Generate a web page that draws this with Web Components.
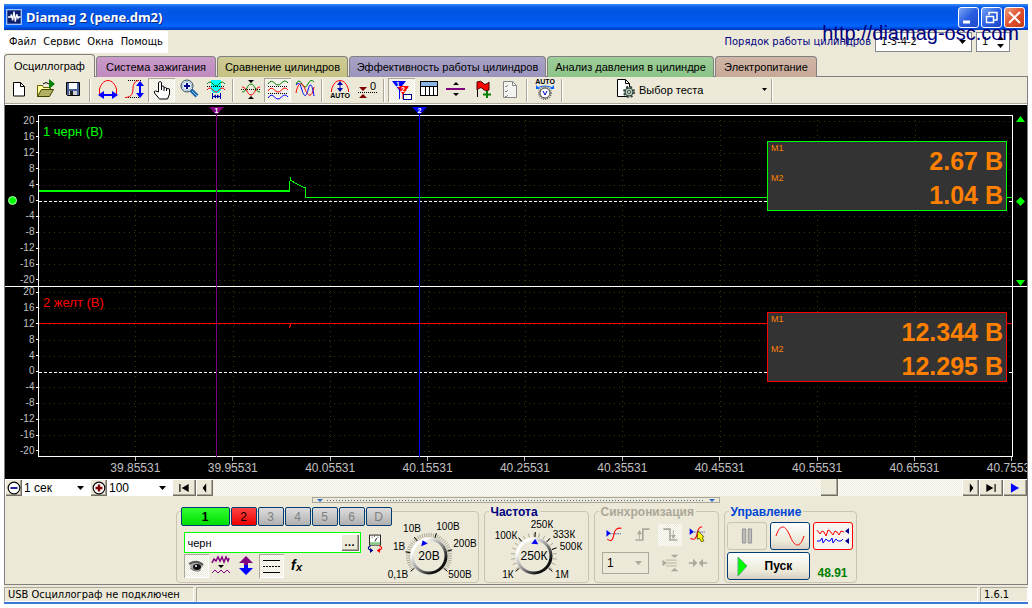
<!DOCTYPE html>
<html lang="ru">
<head>
<meta charset="utf-8">
<title>Diamag 2 (реле.dm2)</title>
<style>
  body { margin: 0; background: #fff; }
</style>
</head>
<body>
<dm-app></dm-app>

<script>
const BASE = `
  :host, *, *::before, *::after { box-sizing: border-box; }
  button, input, select { font: inherit; color: inherit; margin: 0; padding: 0; border: 0; border-radius: 0; background: none; }
  select { appearance: none; }
`;
const DITHER = 'repeating-conic-gradient(#fff 0 25%, #ece9d8 0 50%) 0 0 / 2px 2px';

class Base extends HTMLElement {
  constructor() {
    super();
    this.attachShadow({ mode: 'open' });
  }
  connectedCallback() {
    const t = document.createElement('template');
    t.innerHTML = `<style>${BASE}${this.css()}</style>${this.html()}`;
    this.shadowRoot.replaceChildren(t.content.cloneNode(true));
  }
  css() { return ':host{display:block}'; }
  html() { return '<slot></slot>'; }
  a(name, fallback = '') { return this.getAttribute(name) ?? fallback; }
}

/* ---------- icons, drawn on a 24 x 24 field ---------- */
const ICONS = {
  app: `<rect x="0" y="0" width="24" height="24" fill="#0b1f6b"/><rect x="1" y="1" width="22" height="22" fill="none" stroke="#9fc0ff" stroke-width="2"/><path d="M3 12h4l1-4 2 9 2-13 2 15 2-11 2 6 1-2h3" fill="none" stroke="#fff" stroke-width="2"/>`,
  new: `<path d="M6.500 4.500h7l4 4v9.500h-11z" fill="#fff" stroke="#000"/><path d="M13.500 4.500v4h4" fill="none" stroke="#000"/>`,
  open: `<path d="M3.500 18.500v-11h5l1 2h7v3" fill="#ffff9c" stroke="#606000"/><path d="M3.500 18.500l4-7h12l-4 7z" fill="#b0b060" stroke="#404000"/><path d="M9 6q3-3 6 0" fill="none" stroke="#000"/><path d="M15 1l6 5-6 5z" fill="#008000"/>`,
  save: `<path d="M5.500 4.500h13v13h-12l-1-1z" fill="#4a6396" stroke="#000"/><rect x="8" y="5" width="8" height="6" fill="#fff"/><rect x="8" y="13" width="8" height="4" fill="#d0d0d8"/><rect x="9" y="13" width="3" height="4" fill="#222"/>`,
  hfit: `<path d="M3.500 16v-5C5 6 8 2.500 12 2.500S19 6 20.500 11v5" fill="none" stroke="#f00"/><path d="M5 17h14" stroke="#00f" stroke-width="2"/><path d="M2 17l6-4v8zM22 17l-6-4v8z" fill="#00f"/>`,
  vfit: `<path d="M5 2.500h14M5 19.500h12" stroke="#000" stroke-dasharray="1 1"/><path d="M2 19.500c7 0 8-5 8-9s2-8 6-8" fill="none" stroke="#f00"/><path d="M17 7v9" stroke="#00f" stroke-width="2"/><path d="M17 3l-4 5h8zM17 20l-4-5h8z" fill="#00f"/>`,
  hand: `<path d="M8.500 14V4.500q1.500-2 3 0V10v-1.500q1.500-1 2.500 0V10q1.500-1 2.500 0v1q1.500-1 3 0v5l-2 5h-8l-5-6q-1-2 1-2z" fill="#fff" stroke="#000"/><path d="M11.500 9v3M14 10v3M16.500 11v2" stroke="#000"/>`,
  zoom: `<circle cx="10" cy="8" r="6" fill="#e8f4ff" stroke="#345"/><circle cx="10" cy="8" r="4.500" fill="none" stroke="#9bc"/><path d="M10 5v6M7 8h6" stroke="#008" stroke-width="2"/><path d="M14 12l6 6" stroke="#26a" stroke-width="4"/><path d="M15 13l5 5" stroke="#7cf" stroke-width="1"/>`,
  band: `<rect x="7" y="2" width="10" height="10" fill="#0ff"/><path d="M7 12h10l-2 3H9z" fill="#0ff"/><path d="M3 6q3-4 6 0t6 0 6 0" fill="none" stroke="#008000"/><path d="M3 12q3-4 6 0t6 0 6 0" fill="none" stroke="#f00"/><path d="M3 8.500h18" stroke="#000" stroke-dasharray="1 1"/><path d="M8.500 15v6M16.500 15v6M9 18.500h7" stroke="#00a"/><path d="M9 18.500l3-2v4zM16 18.500l-3-2v4z" fill="#00a"/>`,
  center: `<path d="M3 14c5 0 5-8 9-8s4 8 9 8" fill="none" stroke="#008000"/><path d="M3 9c5 0 5 8 9 8s4-8 9-8" fill="none" stroke="#f00"/><path d="M2 11.500h20" stroke="#000" stroke-dasharray="1 1"/><path d="M9 2h6l-3 3zM9 21h6l-3-3z" fill="#000"/>`,
  split: `<g fill="none"><path d="M2 6q3-5 6.500-1t7 0T22 5" stroke="#008000"/><path d="M2 13q3-5 6.500-1t7 0T22 12" stroke="#f00"/><path d="M2 20q3-5 6.500-1t7 0T22 19" stroke="#00f"/><path d="M2 8.500h20M2 15.500h20" stroke="#000" stroke-dasharray="1 1"/></g>`,
  overlay: `<g fill="none"><path d="M3 6q3-6 6 0t6 0 6-2" stroke="#008000"/><path d="M3 15C5 4 9 3 12 11s7 9 9-2" stroke="#f00"/><path d="M3 7c3-3 4-2 6 5s4 8 6 0 4-7 6 6" stroke="#00f"/></g>`,
  auto0: `<path d="M3.500 14v-2C5 6 8 2.500 12 2.500S19 6 20.500 12v2" fill="none" stroke="#f00"/><path d="M12 5v7" stroke="#00a"/><path d="M12 3l-3 4h6zM12 14l-3-4h6z" fill="#00a"/><text x="12" y="20" font-size="7" font-weight="700" text-anchor="middle">AUTO</text>`,
  zero: `<path d="M4 9h8l-4 4zM4 20h8l-4-4z" fill="#800000"/><path d="M3 14.500h19" stroke="#000" stroke-dasharray="1 1"/><text x="18" y="12" font-size="11" text-anchor="middle">0</text>`,
  markers: `<path d="M2 3h14l-7 9z" fill="#00f"/><path d="M7 8h12l-6 9z" fill="#f00"/><path d="M9.500 11v10" stroke="#00f"/><path d="M13 15v6" stroke="#f00"/><text x="6" y="9" font-size="7" font-weight="700" fill="#fff">1</text><text x="11" y="14" font-size="7" font-weight="700" fill="#fff">2</text><rect x="13.500" y="16.500" width="8" height="5" fill="#fff" stroke="#008"/>`,
  table: `<rect x="3.500" y="3.500" width="17" height="14" fill="#fff" stroke="#000"/><rect x="4" y="4" width="16" height="4" fill="#8ab4e8"/><path d="M4 8.500h16M8.500 8v9M12.500 8v9M16.500 8v9" stroke="#000"/>`,
  minus: `<path d="M2 11h19" stroke="#800080" stroke-width="2"/><path d="M9 7h6l-3-3zM9 15h6l-3 3z"/>`,
  flag: `<path d="M6.500 4v15" stroke="#000"/><path d="M6 4q4-2 6 1t6-1v8q-4 2-6-1t-6 1z" fill="#f00" stroke="#400"/><path d="M16 13v7M12 16.500h8" stroke="#008000" stroke-width="2"/>`,
  list: `<path d="M5.500 3.500h9l4 4v12h-13z" fill="#f4f4f0" stroke="#888"/><path d="M14.500 3.500v4h4M7 8l1 1 2-2M7 13l1 1 2-2M7 18l1 1 2-2" fill="none" stroke="#888"/>`,
  autov: `<text x="12" y="6" font-size="7" font-weight="700" text-anchor="middle">AUTO</text><path d="M4 10q8-4 16 0" fill="none" stroke="#06f"/><path d="M3 7v4h4zM21 7v4h-4z" fill="#06f"/><circle cx="12" cy="15" r="6" fill="none" stroke="#777" stroke-width="2" stroke-dasharray="1 1"/><circle cx="12" cy="15" r="5" fill="#fff" stroke="#444"/><path d="M10 13l2 4 2-4" fill="none" stroke="#00c"/>`,
  test: `<path d="M5.500 1.500h8l4 4v13h-12z" fill="#fff" stroke="#000"/><path d="M13.500 1.500v4h4" fill="none" stroke="#000"/><circle cx="17" cy="14" r="5" fill="#b8ccb0" stroke="#344" stroke-width="2" stroke-dasharray="2 2"/><circle cx="17" cy="14" r="4" fill="#b8ccb0" stroke="#344"/><circle cx="17" cy="14" r="1.500" fill="#fff" stroke="#344"/>`,
  zoomout: `<circle cx="12" cy="12" r="10" fill="#fff" stroke="#000" stroke-width="2"/><path d="M6 12h12" stroke="#008" stroke-width="3"/>`,
  zoomin: `<circle cx="12" cy="12" r="10" fill="#fff" stroke="#000" stroke-width="2"/><path d="M6 12h12M12 6v12" stroke="#800000" stroke-width="4"/>`,
  first: `<path d="M4 5h2v14H4zM8 12l12-7v14z"/>`,
  prev: `<path d="M8 12l6-8v16z"/>`,
  next: `<path d="M16 12l-6-8v16z"/>`,
  last: `<path d="M18 5h2v14h-2zM16 12L4 5v14z"/>`,
  play: `<path d="M5 4l14 8-14 8z" fill="#00f"/>`,
  probe: `<rect x="5.500" y="2.500" width="13" height="12" fill="#fff" stroke="#000"/><rect x="6" y="11" width="12" height="3" fill="#8c8"/><path d="M8 5h1M11 4h1M15 5h1M12 10l2-4" stroke="#000"/><path d="M7 15q-6 3 0 6" fill="none" stroke="#008" stroke-width="1.500"/><path d="M17 15q6 3 0 6" fill="none" stroke="#f00" stroke-width="1.500"/><path d="M6 18v6l4-3z" fill="#008"/><path d="M18 18v6l-4-3z" fill="#f00"/>`,
  eye: `<path d="M6 10q7-5 13 2-3 5-8 5t-5-7z" fill="#a8a8a8"/><path d="M5 10q8-5 14 1" fill="none" stroke="#555" stroke-width="2"/><ellipse cx="13" cy="13" rx="4" ry="3" fill="#111"/><circle cx="12" cy="12" r="1" fill="#fff"/><path d="M6 14q6 5 11 2" fill="none" stroke="#777"/>`,
  noise: `<path d="M3 9l2-4 2 2 2-4 2 4 2-4 2 5 2-5 2 4 1-3" fill="none" stroke="#800080" stroke-width="1.500"/><path d="M9 11h6l-3 3z"/><path d="M3 19l3-3 3 3 3-3 3 3 3-3 3 3" fill="none" stroke="#800080"/>`,
  updown: `<path d="M12 2l7 7h-5v3h-4V9H5z" fill="#800080"/><path d="M12 21l7-7h-5v-3h-4v3H5z" fill="#00f"/>`,
  lines: `<path d="M4 6.500h17M4 18.500h17" stroke="#000"/><path d="M4 12.500h17" stroke="#000" stroke-dasharray="2 1"/>`,
  fx: `<text x="7" y="16" font-size="14" font-style="italic" font-weight="700" font-family="Liberation Serif, serif">f</text><text x="12" y="17" font-size="11" font-style="italic" font-weight="700" font-family="Liberation Serif, serif">x</text>`,
  level: `<path d="M3 6v8l5-4z" fill="#00f"/><path d="M5 10.500h16" stroke="#008" stroke-dasharray="1 1"/><path d="M4 17c5 4 7 0 8-6s4-8 9-7" fill="none" stroke="#f00" stroke-width="1.300"/>`,
  rise: `<path d="M4 18h9V5h8" fill="none" stroke="#aca899" stroke-width="2"/><path d="M9 17V9" stroke="#aca899"/><path d="M6 11l3-5 3 5z" fill="#aca899"/>`,
  fall: `<path d="M4 5h8v13h9" fill="none" stroke="#aca899" stroke-width="2"/><path d="M16 6v8" stroke="#aca899"/><path d="M13 12l3 5 3-5z" fill="#aca899"/>`,
  pick: `<path d="M2 4v8l5-4z" fill="#00f"/><path d="M3 8.500h17" stroke="#008" stroke-dasharray="1 1"/><path d="M3 16c5 3 7 0 8-6s3-8 6-8" fill="none" stroke="#f00" stroke-width="1.300"/><path d="M12 7l7 7-2 1 2 4-3 1-2-4-3 1z" fill="#ff0" stroke="#440"/>`,
  span: `<path d="M3 8v8l5-4z" fill="#aca899"/><path d="M7 8.500h13M8 12h12M7 15.500h13" stroke="#aca899"/><path d="M13 2h9l-4.500 4zM13 22h9l-4.500-4z" fill="#aca899"/>`,
  squeeze: `<path d="M1 12h9M14 12h9" stroke="#aca899" stroke-width="2"/><path d="M6 7l5 5-5 5zM18 7l-5 5 5 5z" fill="#aca899"/>`,
  pause: `<path d="M6.500 3.500h4v17h-4zM13.500 3.500h4v17h-4z" fill="#bdbdbd" stroke="#8a8a8a"/>`,
  start: `<path d="M7 3l9 9-9 10z" fill="#0f0" stroke="#5a7" />`,
};
class DmIcon extends Base {
  css() { return ':host{display:block;width:var(--s,24px);height:var(--s,24px);flex:none} svg{display:block;width:100%;height:100%} text{font-family:"Liberation Sans",Arial,sans-serif}'; }
  html() { return `<svg viewBox="0 0 24 24" aria-hidden="true">${ICONS[this.a('name')] || ''}</svg>`; }
}

/* ---------- title bar ---------- */
class DmTitle extends Base {
  css() { return `
    :host { display:flex; align-items:center; height:26px; padding:0 3px 0 2px; gap:4px;
      background:linear-gradient(#3c8cf6 0,#0a5ce8 3px,#0054e3 8px,#0058ee 16px,#0066ff 22px,#0048d8 24px,#003cb8 26px); }
    dm-icon { --s:16px; }
    h1 { flex:1; margin:0; font:700 13px/20px "Noto Sans","Open Sans",sans-serif; color:#fff; text-shadow:1px 1px #0a2a8a; }
    button { width:21px; height:21px; display:grid; place-items:center; border:1px solid #fff; border-radius:3px; background:linear-gradient(135deg,#7aa4f4,#2a5ee0 50%,#1c48c8); margin-left:-2px; }
    .close { background:linear-gradient(135deg,#f0a080,#e0502c 50%,#c43c18); }
    svg { display:block; width:17px; height:17px; fill:none; stroke:#fff; stroke-width:2; }`; }
  html() { return `
    <dm-icon name="app"></dm-icon><h1><slot></slot></h1>
    <button aria-label="Свернуть"><svg viewBox="0 0 17 17"><path d="M3 13h7" stroke-width="3"/></svg></button>
    <button aria-label="Восстановить"><svg viewBox="0 0 17 17"><path d="M6 6V3.500h8V11h-3" stroke-width="1.500"/><path d="M3.500 7.500h7v6h-7z" stroke-width="1.500"/></svg></button>
    <button class="close" aria-label="Закрыть"><svg viewBox="0 0 17 17"><path d="M3 3l11 11M14 3L3 14"/></svg></button>`; }
}

/* ---------- menu row ---------- */
class DmMenu extends Base {
  css() { return `
    :host { display:flex; justify-content:space-between; height:24px; padding-right:18px; font:11px/16px "DejaVu Sans Condensed","DejaVu Sans",sans-serif; color:#000; }
    nav { display:flex; align-items:center; gap:7px; background:#fff; height:22px; margin-top:1px; padding:0 5px; }
    .r { display:flex; align-items:center; gap:4px; }
    label { color:#000080; }
    .box { display:flex; align-items:center; background:#fff; border:1px solid #828790; height:20px; padding:0 5px; }
    .box > select { width:78px; } .box > input { width:15px; }
    svg { display:block; flex:none; }`; }
  html() { return `
    <nav><button>Файл</button><button>Сервис</button><button>Окна</button><button>Помощь</button></nav>
    <div class="r"><label for="ord">Порядок работы цилиндров</label>
      <span class="box"><select id="ord"><option>1-3-4-2</option></select><svg width="7" height="4"><path d="M0 0h7l-3.500 4z"/></svg></span>
      <span class="box"><input id="cyl" value="1" aria-label="Цилиндр"><svg width="7" height="12"><path d="M0 4h7L3.500 0zM0 8h7l-3.500 4z"/></svg></span></div>`; }
}

/* ---------- tabs ---------- */
class DmTab extends Base {
  css() { return `
    :host { display:block; flex:0 0 var(--w); }
    button { display:block; width:100%; height:21px; margin-top:2px; background:linear-gradient(color-mix(in srgb,var(--c) 85%,#fff),var(--c)); border:1px solid #808080; border-bottom:0; border-radius:4px 4px 0 0; font:11px/18px "Liberation Sans",Arial,sans-serif; color:#000; white-space:nowrap; }
    :host([active]) button { height:23px; margin:0; line-height:20px; }`; }
  html() { return `<button role="tab" aria-selected="${this.hasAttribute('active')}"><slot></slot></button>`; }
}
class DmTabs extends Base {
  css() { return ':host{display:flex;gap:1px;height:23px;border-bottom:1px solid #808080;}'; }
}

/* ---------- toolbar ---------- */
class DmTool extends Base {
  css() { return `
    :host { display:block; }
    button { display:grid; place-items:center; width:var(--w,27px); height:var(--h,24px); }
    :host([pressed]) button { background:${DITHER}; box-shadow:inset 1px 1px #aca899, inset -1px -1px #fff; }
    :host([raised]) button { background:#ece9d8; box-shadow:inset 1px 1px #fff, inset -1px -1px #716f64, inset -2px -2px #aca899; }`; }
  html() { return `<button aria-label="${this.a('label')}"><dm-icon name="${this.a('icon')}"></dm-icon></button>`; }
}
class DmToolbar extends Base {
  css() { return `
    :host { display:flex; align-items:center; height:28px; padding:0 0 1px; border-bottom:1px solid #fff; box-shadow:inset 0 -1px #aca899; font:11px/16px "Liberation Sans",Arial,sans-serif; color:#000; }
    i { width:2px; height:23px; margin:0 3px; background:linear-gradient(90deg,#aca899 50%,#fff 50%); }
    .menu { display:flex; align-items:center; gap:3px; width:156px; margin-left:46px; text-align:left; }
    .menu span { flex:1; }`; }
  html() {
    const t = s => s.split(' ').map(n => n === '|' ? '<i></i>' : `<dm-tool icon="${n.replace('*', '')}" label="${n.replace('*', '')}" ${n.endsWith('*') ? 'pressed' : ''}></dm-tool>`).join('');
    return t('new open save | hfit vfit hand* zoom band | center split* overlay | auto0 zero | markers* table minus flag list | autov |') +
      `<button class="menu"><dm-icon name="test"></dm-icon><span>Выбор теста</span><svg width="7" height="4"><path d="M1 0h5L3.500 3z"/></svg></button><i></i>`;
  }
}

/* ---------- oscillogram ---------- */
class DmReadout extends Base {
  css() { return `
    :host { display:grid; grid-template-rows:30px 34px; background:#333; border:1px solid var(--c); width:240px; height:70px; padding:2px 3px; color:#ff8000; font-family:"Liberation Sans",Arial,sans-serif; }
    div { display:flex; justify-content:space-between; font:700 25px/34px "Liberation Sans",Arial,sans-serif; }
    div + div span { padding-top:4px; }
    small { font:9px/9px "Liberation Sans",Arial,sans-serif; }`; }
  html() { return `<div><small>М1</small><span>${this.a('m1')}</span></div><div><small>М2</small><span>${this.a('m2')}</span></div>`; }
}
class DmChannel extends Base {
  css() { return `
    :host { display:grid; grid-template-columns:33px 1fr 14px; flex:1 0 171px; font-family:"Liberation Sans",Arial,sans-serif; }
    .axis { display:grid; grid-template-columns:15px 1fr; align-items:center; }
    .dot { width:9px; height:9px; margin-left:3px; border-radius:50%; background:#0f0; border:1px solid #bfb; }
    ul { list-style:none; margin:0; padding:0; height:100%; display:flex; flex-direction:column; justify-content:space-between; text-align:right; font-size:10px; line-height:12px; color:#c0c0c0; }
    li { display:flex; align-items:center; justify-content:flex-end; gap:2px; height:12px; }
    li::after { content:""; width:3px; height:1px; background:#fff; }
    .plot { position:relative; border:1px solid #fff; border-width:1px 1px 0 1px; }
    svg.g { position:absolute; inset:0; width:100%; height:100%; shape-rendering:crispEdges; }
    h2 { position:absolute; left:4px; top:8px; margin:0; font-size:13px; line-height:16px; font-weight:400; color:var(--c); }
    dm-readout { position:absolute; right:5px; top:25px; }
    .side { display:flex; flex-direction:column; justify-content:space-between; align-items:center; padding:1px 0 0 1px; }
    .side svg { display:block; fill:#0f0; }
    :host([second]) { box-shadow:inset 0 1px #fff; }
    :host([second]) .plot { border-bottom-width:1px; }`; }
  html() {
    const first = !this.hasAttribute('second');
    let g = '';
    for (let i = 0; i < 11; i++) if (i !== 5) g += `<path d="M0 ${5.5 + Math.round(i * 15.9)}H973" stroke="#3a3a00" stroke-dasharray="1 4"/>`;
    for (let i = 1; i < 10; i++) g += `<path d="M${Math.round(i * 97.4) - .5} 4V171" stroke="#3a3a00" stroke-dasharray="1 4"/>`;
    const sig = first
      ? `<path d="M0 75H251" stroke="#0f0" stroke-width="2"/><path d="M250.500 75V69L251.500 61V64L254.500 66L260 69L266.500 72V81.500H973" fill="none" stroke="#0f0"/>`
      : `<path d="M0 36.500H973" stroke="#f00"/><path d="M251.500 37v2h-1v2" fill="none" stroke="#f00"/>`;
    const labels = [20,16,12,8,4,0,-4,-8,-12,-16,-20].map(v => `<li>${v}</li>`).join('');
    return `
      <div class="axis"><span>${first ? '<div class="dot"></div>' : ''}</span><ul>${labels}</ul></div>
      <div class="plot"><svg class="g" viewBox="0 0 973 ${first ? 170 : 169}" preserveAspectRatio="none">${g}<path d="M0 85.500H973" stroke="#fff" stroke-dasharray="3 2"/>${sig}</svg>
        <h2>${this.a('name')}</h2><dm-readout m1="${this.a('m1')}" m2="${this.a('m2')}"></dm-readout></div>
      <div class="side">${first ? '<svg width="9" height="6"><path d="M0 6h9L4.500 0z"/></svg><svg width="9" height="9"><path d="M4.500 0L9 4.500 4.500 9 0 4.500z"/></svg><svg width="9" height="6"><path d="M0 0h9L4.500 6z"/></svg>' : ''}</div>`;
  }
}
class DmScope extends Base {
  css() { return `
    :host { display:flex; flex-direction:column; flex:1 0 auto; position:relative; padding-top:10px; background:#000; overflow:hidden; font-family:"Liberation Sans",Arial,sans-serif; }
    ol { list-style:none; display:flex; margin:0 15px 0 33px; padding:0 0 0 calc((100% - 48px) * .05); height:22px; font-size:12px; line-height:14px; color:#c0c0c0; }
    li { flex:0 0 calc(100% / 9.5); text-align:center; }
    li::before { content:""; display:block; width:1px; height:4px; margin:0 auto; background:#c0c0c0; }
    .cursors { position:absolute; top:2px; bottom:22px; left:33px; right:15px; pointer-events:none; }
    .cur { position:absolute; top:0; bottom:0; width:15px; margin-left:-7px; display:flex; flex-direction:column; align-items:center; }
    .cur svg { display:block; flex:none; }
    .cur::after { content:""; flex:1; width:1px; background:var(--l); }
    text { font:700 7px "Liberation Sans",Arial,sans-serif; fill:#fff; text-anchor:middle; }`; }
  html() {
    const xs = ['39.85531','39.95531','40.05531','40.15531','40.25531','40.35531','40.45531','40.55531','40.65531','40.75531'];
    const cur = (n, left, c) => `<div class="cur" style="left:${left};--l:${c}"><svg width="15" height="8"><path d="M0 0h15L7.500 8z" fill="${c}"/><text x="7.500" y="6">${n}</text></svg></div>`;
    return `<slot></slot><ol>${xs.map(x => `<li>${x}</li>`).join('')}</ol>
      <div class="cursors">${cur(2, '39.100%', '#00f')}${cur(1, '18.300%', '#800080')}</div>`;
  }
}

/* ---------- time scroll row ---------- */
class DmScroll extends Base {
  css() { return `
    :host { display:flex; align-items:stretch; height:17px; font:12px/16px "Liberation Sans",Arial,sans-serif; color:#000; }
    dm-tool { --h:17px; --s:14px; }
    .sel { display:flex; align-items:center; background:#fff; padding:0 6px 0 2px; }
    .sel select { width:100%; }
    .sel svg { flex:none; }
    .track { flex:1; display:flex; background:${DITHER}; }
    .track::before { content:""; flex:607; }
    .track::after { content:""; flex:124; }
    .thumb { width:17px; background:#ece9d8; box-shadow:inset -1px -1px #716f64, inset -2px -2px #aca899; }`; }
  html() {
    const b = (n, w) => `<dm-tool raised icon="${n}" label="${n}" style="--w:${w}px"></dm-tool>`;
    const arrow = '<svg width="7" height="4"><path d="M0 0h7l-3.500 4z"/></svg>';
    return b('zoomout', 17) + `<span class="sel" style="width:68px"><select aria-label="Развёртка"><option>1 сек</option></select>${arrow}</span>` +
      b('zoomin', 17) + `<span class="sel" style="width:65px"><select aria-label="Масштаб"><option>100</option></select>${arrow}</span>` +
      b('first', 24) + b('prev', 17) + '<div class="track"><span class="thumb"></span></div>' + b('next', 17) + b('last', 24) + b('play', 24);
  }
}

/* ---------- control panel ---------- */
class DmGroup extends Base {
  css() { return `
    :host { display:block; width:var(--gw,105px); }
    fieldset { position:relative; min-width:0; height:79px; margin:0; padding:0; border:0; }
    fieldset::before { content:""; position:absolute; inset:7px 0 0 0; border:1px solid #c9c5b2; border-radius:4px; pointer-events:none; }
    legend { position:absolute; left:5px; top:1px; padding:0 2px; background:#ece9d8; font:700 12px/14px "Liberation Sans",Arial,sans-serif; color:var(--c,#000080); }
    .in { position:relative; height:100%; }`; }
  html() { return `<fieldset>${this.a('title') ? `<legend>${this.a('title')}</legend>` : ''}<div class="in"><slot></slot></div></fieldset>`; }
}
class DmDial extends Base {
  css() { return `:host{display:block;width:72px;height:70px;flex:none} svg{display:block;width:72px;height:70px;overflow:visible} text{font:10px "Liberation Sans",Arial,sans-serif;text-anchor:middle} .v{font-size:12px}`; }
  html() {
    const p = (r, a) => `${(r * Math.sin(a * Math.PI / 180)).toFixed(1)} ${(-r * Math.cos(a * Math.PI / 180)).toFixed(1)}`;
    const step = +this.a('step', '6');
    let s = '';
    for (let a = -126; a <= 126; a += step) s += `<path d="M${p(19, a)}L${p(23, a)}" stroke="#aca899"/>`;
    for (const item of this.a('marks').split(';')) {
      const [t, a, x, y] = item.split('|');
      s += `<path d="M${p(19, +a)}L${p(24, +a)}" stroke="#000"/><text x="${x}" y="${y}">${t}</text>`;
    }
    const k = +this.a('at');
    return `<svg viewBox="-36 -38 72 70"><defs><linearGradient id="k" x1="0" y1="0" x2="1" y2="1"><stop offset=".2" stop-color="#fff"/><stop offset=".5" stop-color="#999"/><stop offset=".8" stop-color="#111"/></linearGradient></defs>${s}
      <circle r="17" fill="#ece9d8" stroke="url(#k)" stroke-width="3"/><path d="M0 -17l3.500 5h-7z" fill="#00f" transform="rotate(${k})"/><text class="v" y="4">${this.a('value')}</text></svg>`;
  }
}
class DmChannelPanel extends Base {
  css() { return `
    :host { display:flex; justify-content:space-between; height:100%; padding:3px 14px 0 5px; font:12px/16px "Liberation Sans",Arial,sans-serif; color:#000; }
    .left { width:211px; flex:none; }
    .tabs { display:grid; grid-template-columns:49px repeat(6,26px); gap:1px; }
    .tabs button { height:19px; border:1px solid #003c74; border-radius:2px; background:linear-gradient(#ddd,#b0b0b0); color:#808080; }
    .tabs .g { background:linear-gradient(#3f3,#0d0); color:#000; font-weight:700; }
    .tabs .r { background:linear-gradient(#f44,#e00); color:#000; }
    .name { display:flex; align-items:center; gap:4px; margin:6px 0 0 3px; }
    .field { display:flex; align-items:center; width:177px; height:21px; border:1px solid #0f0; background:#fff; padding:1px 1px 1px 3px; font-size:11px; }
    input { flex:1; min-width:0; }
    .field button { width:18px; height:17px; line-height:9px; font-weight:700; background:#ece9d8; box-shadow:inset 1px 1px #fff, inset -1px -1px #716f64, inset -2px -2px #aca899; }
    .name dm-icon { --s:20px; }
    .tools { display:flex; margin:1px 0 0 3px; }
    .tools dm-tool { --w:25px; --h:24px; }
    dm-dial { margin-top:11px; }`; }
  html() {
    return `<div class="left"><div class="tabs"><button class="g">1</button><button class="r">2</button>${['3','4','5','6','D'].map(n => `<button>${n}</button>`).join('')}</div>
      <div class="name"><span class="field"><input aria-label="Имя канала" value="черн"><button aria-label="Обзор">…</button></span><dm-icon name="probe"></dm-icon></div>
      <div class="tools"><dm-tool icon="eye" label="Показать" pressed></dm-tool><dm-tool icon="noise" label="Фильтр"></dm-tool><dm-tool icon="updown" label="Сдвиг"></dm-tool><dm-tool icon="lines" label="Линии" pressed></dm-tool><dm-tool icon="fx" label="Функция"></dm-tool></div></div>
      <dm-dial value="20В" at="-22" marks="0,1В|-130|-31|22;1В|-80|-30|-6;10В|-38|-17|-24;100В|18|19|-26;200В|75|36|-9;500В|130|31|22"></dm-dial>`;
  }
}
class DmSync extends Base {
  css() { return `
    :host { display:grid; grid-template-columns:repeat(4,28px); grid-template-rows:28px 28px; justify-content:center; align-content:end; align-items:center; justify-items:center; height:100%; padding:0 3px 6px; font:12px/16px "Liberation Sans",Arial,sans-serif; color:#000; }
    dm-tool { --w:24px; --h:22px; --s:20px; }
    .on { background:${DITHER}; }
    .sel { grid-column:span 2; width:47px; height:22px; justify-self:start; margin-left:2px; display:flex; align-items:center; border:1px solid #aca899; padding:0 6px 0 4px; }
    select { flex:1; }`; }
  html() { return `
    <dm-tool icon="level" label="Уровень"></dm-tool><dm-tool icon="rise" label="Фронт"></dm-tool><dm-tool class="on" icon="fall" label="Спад"></dm-tool><dm-tool icon="pick" label="Выбрать"></dm-tool>
    <span class="sel"><select aria-label="Канал синхронизации"><option>1</option></select><svg width="7" height="4"><path d="M0 0h7l-3.500 4z" fill="#aca899"/></svg></span><dm-tool icon="span" label="Диапазон"></dm-tool><dm-tool icon="squeeze" label="Сжать"></dm-tool>`; }
}
class DmControl extends Base {
  css() { return `
    :host { display:grid; grid-template-columns:40px 40px 40px; grid-template-rows:28px 28px; gap:2px 3px; padding:18px 3px 0; font:700 12px/16px "Liberation Sans",Arial,sans-serif; color:#000; }
    button { display:grid; place-items:center; border:1px solid #003c74; border-radius:3px; background:linear-gradient(#fff,#ece9d8 70%,#d6d0c5); }
    .off { border-color:#c9c5b2; background:#ece9d8; }
    .red { border-color:#f00; background:#f7f5f0; }
    .go { grid-column:span 2; display:flex; align-items:center; gap:10px; padding-left:3px; }
    output { align-self:end; justify-self:center; line-height:14px; color:#008000; }
    svg { display:block; fill:none; }`; }
  html() { return `
    <button class="off" aria-label="Пауза"><dm-icon name="pause" style="--s:20px"></dm-icon></button>
    <button aria-label="Синус"><svg width="30" height="20"><path d="M1 10C5 -2 10 -2 15 10s10 12 14 0" stroke="#f00"/></svg></button>
    <button class="red" aria-label="Серия"><svg width="34" height="20"><path d="M1 4l3 4 2-3 2 1 2 4 2-6 2 1 3 4 2-4 2 1 2 3 2-4 3 1" stroke="#f00"/><path d="M1 15h3l2-3 1 5 3-4 2 2h2l2-3 1 5 3-4 2 2h3l2-2" stroke="#00f"/><path d="M33 2v6l-4-3zM33 12v6l-4-3z" fill="#008"/></svg></button>
    <button class="go"><dm-icon name="start"></dm-icon>Пуск</button><output>48.91</output>`; }
}
class DmPanel extends Base {
  css() { return `
    :host { display:flex; flex-direction:column; align-items:center; height:88px; padding-top:1px; }
    .split { width:408px; height:6px; border:1px solid #aca899; display:flex; align-items:center; gap:4px; padding:0 4px; }
    .split::before, .split::after { content:""; border:3px solid transparent; border-top-color:#316ac5; border-bottom:0; }
    .split i { flex:1; height:1px; background:repeating-linear-gradient(90deg,#4a6aa8 0 1px,transparent 1px 3px); }
    .row { display:flex; gap:5px; margin-top:1px; }
    .row > dm-group > dm-dial { margin:0 14px; padding-top:14px; height:84px; }`; }
  html() { return `
    <div class="split"><i></i></div>
    <div class="row">
      <dm-group style="--gw:303px"><dm-channel-panel></dm-channel-panel></dm-group>
      <dm-group title="Частота"><dm-dial step="14" value="250К" at="4" marks="1К|-130|-26|22;100К|-40|-28|-17;250К|3|8|-28;333К|42|30|-18;500К|70|37|-6;1М|130|28|22"></dm-dial></dm-group>
      <dm-group title="Синхронизация" style="--gw:125px;--c:#aca899"><dm-sync></dm-sync></dm-group>
      <dm-group title="Управление" style="--gw:133px;--c:#0046d5"><dm-control></dm-control></dm-group>
    </div>`; }
}

/* ---------- status bar ---------- */
class DmStatus extends Base {
  css() { return `
    :host { display:flex; gap:2px; height:20px; padding-top:2px; border-top:1px solid #808080; border-bottom:2px solid #3a78d8; font:11px/14px "DejaVu Sans Condensed","DejaVu Sans",sans-serif; color:#000; background:#ece9d8; }
    span { border:1px solid #aca899; border-color:#aca899 #fff #fff #aca899; padding-left:3px; white-space:nowrap; }
    .a { flex:0 0 190px; } .b { flex:1; } .c { flex:0 0 48px; }`; }
  html() { return `<span class="a">USB Осциллограф не подключен</span><span class="b"></span><span class="c">1.6.1</span>`; }
}

class DmApp extends Base {
  css() { return `
    :host { display:flex; flex-direction:column; min-height:100vh; padding:4px; background:#fff; }
    main { position:relative; flex:1; display:flex; flex-direction:column; background:#ece9d8; }
    .body { flex:1; display:flex; flex-direction:column; border:1px solid #808080; border-width:0 1px 0 1px; }
    a { position:absolute; right:9px; top:17px; font:20px/24px "Liberation Sans",Arial,sans-serif; color:#000080; text-decoration:none; }`; }
  html() { return `<main>
    <dm-title>Diamag 2 (реле.dm2)</dm-title>
    <dm-menu></dm-menu>
    <dm-tabs role="tablist">
      <dm-tab active style="--w:91px;--c:#ece9d8">Осциллограф</dm-tab>
      <dm-tab style="--w:120px;--c:#bf8abf">Система зажигания</dm-tab>
      <dm-tab style="--w:131px;--c:#c5c283">Сравнение цилиндров</dm-tab>
      <dm-tab style="--w:197px;--c:#9a93bc">Эффективность работы цилиндров</dm-tab>
      <dm-tab style="--w:167px;--c:#8cc487">Анализ давления в цилиндре</dm-tab>
      <dm-tab style="--w:102px;--c:#c8a998">Электропитание</dm-tab>
    </dm-tabs>
    <div class="body">
      <dm-toolbar></dm-toolbar>
      <dm-scope>
        <dm-channel name="1 черн (В)" m1="2.67 В" m2="1.04 В" style="--c:#0f0"></dm-channel>
        <dm-channel second name="2 желт (В)" m1="12.344 В" m2="12.295 В" style="--c:#f00"></dm-channel>
      </dm-scope>
      <dm-scroll></dm-scroll>
      <dm-panel></dm-panel>
    </div>
    <dm-status></dm-status>
    <a href="http://diamag-osc.com">http://diamag-osc.com</a>
  </main>`; }
}

const defs = { 'dm-icon': DmIcon, 'dm-title': DmTitle, 'dm-menu': DmMenu, 'dm-tab': DmTab, 'dm-tabs': DmTabs, 'dm-tool': DmTool, 'dm-toolbar': DmToolbar,
  'dm-readout': DmReadout, 'dm-channel': DmChannel, 'dm-scope': DmScope, 'dm-scroll': DmScroll, 'dm-group': DmGroup, 'dm-dial': DmDial,
  'dm-channel-panel': DmChannelPanel, 'dm-sync': DmSync, 'dm-control': DmControl, 'dm-panel': DmPanel, 'dm-status': DmStatus, 'dm-app': DmApp };
for (const [name, cls] of Object.entries(defs)) customElements.define(name, cls);
</script>
</body>
</html>
